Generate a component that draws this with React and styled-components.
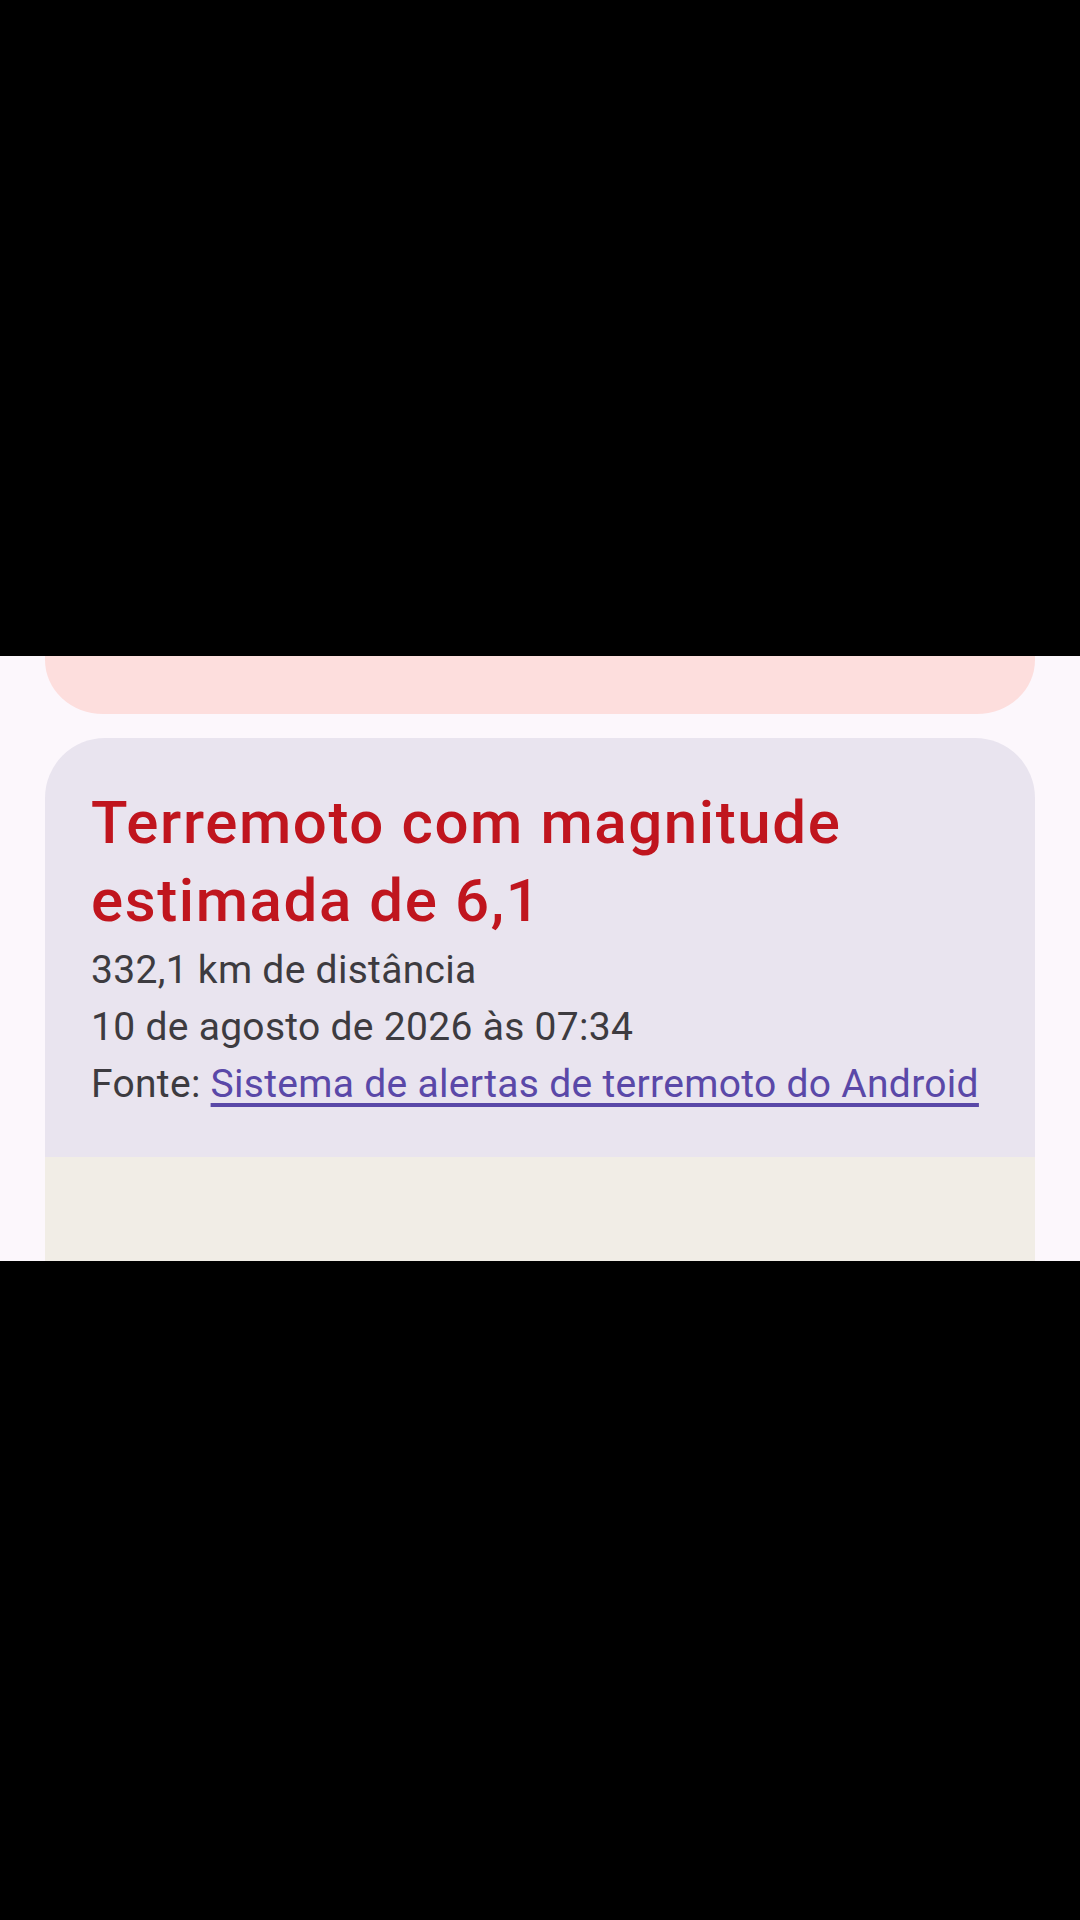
import React from 'react'
import styled, { createGlobalStyle } from 'styled-components'

const GlobalStyle = createGlobalStyle`
    html, body {
        margin: 0;
        padding: 0;
        background: #000;
    }
    body {
        font-family: Roboto, 'Noto Sans', sans-serif;
    }
`

const Page = styled.div`
    display: flex;
    flex-direction: column;
    width: 1080px;
    height: 1920px;
    background: #000;
`

const Letterbox = styled.div`
    height: ${props => props.size}px;
    background: #000;
    flex-shrink: 0;
`

const Screen = styled.div`
    display: flex;
    flex-direction: column;
    gap: 24px;
    height: 605px;
    padding: 0 45px;
    background: #fcf7fc;
    overflow: hidden;
    flex-shrink: 0;
`

const PreviousCard = styled.div`
    height: 58px;
    flex-shrink: 0;
    background: #fddedd;
    border-radius: 0 0 58px 58px / 0 0 54px 54px;
`

const AlertList = styled.div`
    display: flex;
    flex-direction: column;
    flex: 1;
    border-radius: 60px 60px 0 0;
    overflow: hidden;
`

const AlertItem = styled.div`
    display: flex;
    flex-direction: column;
    height: 419px;
    box-sizing: border-box;
    padding: 46px 46px 0;
    background: #e9e4ef;
    flex-shrink: 0;
`

const NextItem = styled.div`
    flex: 1;
    background: #f1ede6;
`

const Title = styled.h1`
    margin: 0 0 2px;
    font-family: Roboto, sans-serif;
    font-weight: 500;
    font-size: 60px;
    line-height: 78px;
    color: #c0151e;
    letter-spacing: 1.6px;
`

const Detail = styled.p`
    margin: 0;
    font-family: Roboto, sans-serif;
    font-size: 39px;
    line-height: 57px;
    color: #3d3b40;
    letter-spacing: 0.3px;
`

const SourceLink = styled.a`
    color: #5a48a8;
    text-decoration: underline;
    text-decoration-thickness: 4px;
    text-underline-offset: 6px;
`

export default function App() {
    return (
        <Page>
            <GlobalStyle />
            <Letterbox size={656} />
            <Screen>
                <PreviousCard />
                <AlertList>
                    <AlertItem>
                        <Title>Terremoto com magnitude estimada de 6,1</Title>
                        <Detail>332,1 km de distância</Detail>
                        <Detail>10 de agosto de 2026 às 07:34</Detail>
                        <Detail>
                            Fonte: <SourceLink href="#">Sistema de alertas de terremoto do Android</SourceLink>
                        </Detail>
                    </AlertItem>
                    <NextItem />
                </AlertList>
            </Screen>
            <Letterbox size={659} />
        </Page>
    )
}
